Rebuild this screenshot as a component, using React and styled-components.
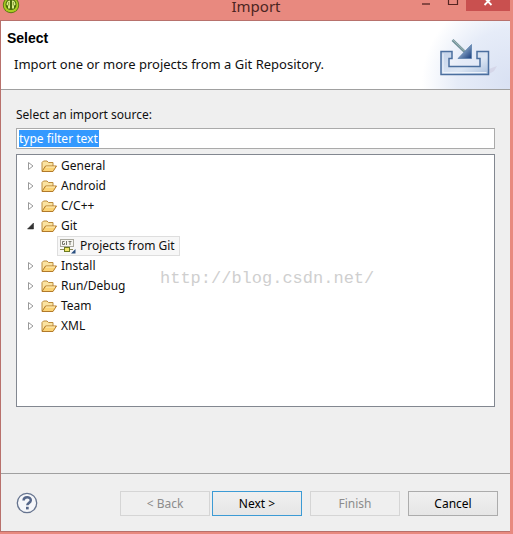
import React from 'react';
import styled, { createGlobalStyle } from 'styled-components';

const GlobalStyle = createGlobalStyle`
  * {
    box-sizing: border-box;
  }
  body {
    margin: 0;
    background: #e8897f;
    color: #111;
    font-family: 'Noto Sans', 'Open Sans', sans-serif;
    font-size: 12px;
    line-height: 20px;
  }
  button,
  input {
    font: inherit;
    color: inherit;
  }
`;

const folders = [
  { name: 'General' },
  { name: 'Android' },
  { name: 'C/C++' },
  { name: 'Git', children: ['Projects from Git'] },
  { name: 'Install' },
  { name: 'Run/Debug' },
  { name: 'Team' },
  { name: 'XML' }
];

const AppIcon = () => (
  <svg width="18" height="14" viewBox="0 0 18 14" aria-hidden="true">
    <circle cx="9" cy="5" r="8.200" fill="#56750f" />
    <circle cx="9" cy="5" r="7.300" fill="#a9cc22" />
    <circle cx="9" cy="4.500" r="5.500" fill="#4a6a0c" />
    <path
      d="M8 0.500q-3.500 0-3.500 4.500l1.500 0.500v3h2zM10 0.500q3.500 0 3.500 4.500l-1.500 0.500v3h-2z"
      fill="#dcec86"
    />
    <path d="M6.700 2v3.500M11.300 2v3.500" stroke="#56750f" strokeWidth="0.700" />
  </svg>
);

const ImportIcon = () => (
  <svg width="60" height="44" viewBox="0 0 60 44" aria-hidden="true">
    <defs>
      <linearGradient id="tray" x1="0" y1="0" x2="1" y2="1">
        <stop offset="0" stopColor="#c3d2e8" />
        <stop offset="0.600" stopColor="#dce6f4" />
        <stop offset="1" stopColor="#aabfdc" />
      </linearGradient>
      <linearGradient id="head" x1="0" y1="0" x2="1" y2="1">
        <stop offset="0.200" stopColor="#a9c3dc" />
        <stop offset="1" stopColor="#173c7c" />
      </linearGradient>
    </defs>
    <path d="M49 31l8-3-3 5-5 3z" fill="#cfcbe0" opacity="0.600" />
    <path
      d="M1 13.500h11v7H9v8h31v-8h-3v-7h11.500V36.500H1z"
      fill="url(#tray)"
      stroke="#4b6f9f"
      strokeWidth="1.500"
    />
    <path d="M3 15.500v19h43.500" fill="none" stroke="#edf3fb" />
    <path d="M12.500 2l13 12.500" stroke="#6f9099" strokeWidth="2.600" />
    <path d="M13 2l12 11.500" stroke="#a3b9b5" strokeWidth="1" />
    <path d="M31.500 6.500v14H18z" fill="url(#head)" stroke="#547ba9" strokeWidth="0.700" />
  </svg>
);

const FolderIcon = () => (
  <svg width="16" height="16" viewBox="0 0 16 16" aria-hidden="true">
    <path
      d="M1 13V4.500l1.500-1.500h3.500l1.500 1.500h4.500V8"
      fill="#fbe3a0"
      stroke="#bc8c3e"
    />
    <path d="M1 13.500l3.500-5.500h11l-3.500 5.500z" fill="#fbd375" stroke="#b27a2a" />
    <path d="M5 9h9" stroke="#fff0c0" />
  </svg>
);

const GitIcon = () => (
  <svg width="16" height="16" viewBox="0 0 16 16" aria-hidden="true">
    <rect x="0.500" y="1.500" width="13" height="7" fill="#f6f6f1" stroke="#aaa99f" />
    <path
      d="M4.500 3.500h-2v3h2v-1.500M6.500 3v4M8.500 3.500h3M10 3.500v3.500"
      stroke="#77776d"
      fill="none"
    />
    <path d="M0 11.500h13" stroke="#8a8a5a" />
    <rect x="4.500" y="9.500" width="5" height="4" fill="#f1e66a" stroke="#6b7a22" />
    <path d="M15.500 11v4.500H11z" fill="#284f80" />
  </svg>
);

const Arrow = ({ open }) => (
  <svg width="8" height="10" viewBox="0 0 8 10" aria-hidden="true">
    {open ? (
      <path d="M6.500 2v6H0.500z" fill="#333" stroke="#222" strokeWidth="0.500" />
    ) : (
      <path d="M1.500 1.500l4.500 3.500-4.500 3.500z" fill="#fff" stroke="#999" />
    )}
  </svg>
);

const HelpIcon = () => (
  <svg width="22" height="22" viewBox="0 0 22 22" aria-hidden="true">
    <circle cx="11" cy="11" r="9.700" fill="#f5f6f9" stroke="#66748f" strokeWidth="1.300" />
    <path
      d="M7.600 8.500c0-4.300 7.200-4.200 7.200-0.200 0 2.600-3.500 2.500-3.500 5"
      fill="none"
      stroke="#566789"
      strokeWidth="2.500"
    />
    <rect x="10" y="14.800" width="2.700" height="2.600" fill="#566789" />
  </svg>
);

const App = () => (
  <Window>
    <GlobalStyle />
    <TitleBar>
      <AppIcon />
      <WindowTitle>Import</WindowTitle>
      <WindowControls>
        <ControlButton aria-label="Minimize">
          <svg width="10" height="10" viewBox="0 0 10 10">
            <path d="M1 4h8" stroke="#67332f" strokeWidth="1.500" />
          </svg>
        </ControlButton>
        <ControlButton aria-label="Maximize">
          <svg width="10" height="10" viewBox="0 0 10 10">
            <path d="M0.500 0v4.500h9V0" stroke="#552522" strokeWidth="1.200" fill="none" />
          </svg>
        </ControlButton>
        <ControlButton aria-label="Close" $close>
          <svg width="10" height="10" viewBox="0 0 10 10">
            <path d="M1.500 5l7-7M8.500 5l-7-7" stroke="#fff" strokeWidth="1.800" />
          </svg>
        </ControlButton>
      </WindowControls>
    </TitleBar>
    <Dialog>
      <Header>
        <div>
          <Heading>Select</Heading>
          <Description>Import one or more projects from a Git Repository.</Description>
        </div>
        <Banner>
          <ImportIcon />
        </Banner>
      </Header>
      <Content>
        <label htmlFor="filter">Select an import source:</label>
        <FilterBox>
          <FilterInput id="filter" type="text" defaultValue="type filter text" />
        </FilterBox>
        <Tree role="tree">
          {folders.map(({ name, children }) => (
            <li key={name} role="treeitem" aria-expanded={Boolean(children)}>
              <TreeRow>
                <Arrow open={Boolean(children)} />
                <FolderIcon />
                <span>{name}</span>
              </TreeRow>
              {children && (
                <Branch role="group">
                  {children.map((child) => (
                    <Leaf key={child} role="treeitem">
                      <GitIcon />
                      <span>{child}</span>
                    </Leaf>
                  ))}
                </Branch>
              )}
            </li>
          ))}
          <Watermark>http://blog.csdn.net/</Watermark>
        </Tree>
      </Content>
      <Footer>
        <HelpButton aria-label="Help">
          <HelpIcon />
        </HelpButton>
        <Actions>
          <Pair>
            <Button disabled>&lt; Back</Button>
            <Button $primary>Next &gt;</Button>
          </Pair>
          <Button disabled>Finish</Button>
          <Button>Cancel</Button>
        </Actions>
      </Footer>
    </Dialog>
  </Window>
);

export default App;

const Window = styled.div`
  display: flex;
  flex-direction: column;
  min-height: 100vh;
  padding: 0 3px 2px 0;
  background: #e8897f;
`;

const TitleBar = styled.header`
  display: grid;
  grid-template-columns: 1fr auto 1fr;
  align-items: start;
  height: 20px;
  padding-left: 2px;
`;

const WindowTitle = styled.span`
  color: #4b2522;
  font-size: 15px;
  line-height: 12px;
`;

const WindowControls = styled.div`
  display: flex;
  justify-content: flex-end;
`;

const ControlButton = styled.button`
  display: flex;
  justify-content: center;
  width: ${(props) => (props.$close ? '44px' : '27px')};
  height: 11px;
  padding: 0;
  border: none;
  background: ${(props) => (props.$close ? '#c9504f' : 'transparent')};
  svg {
    overflow: visible;
  }
`;

const Dialog = styled.main`
  display: flex;
  flex: 1;
  flex-direction: column;
  border: 1px solid #b8716c;
  border-right: none;
  background: #efefef;
`;

const Header = styled.section`
  display: flex;
  justify-content: space-between;
  height: 69px;
  padding: 7px 0 0 6px;
  border-bottom: 1px solid #a0a0a0;
  background:
    radial-gradient(circle 88px at 100% 90%, #d9e1f3 0, #e6ecf8 60%, transparent 100%),
    #fff;
`;

const Heading = styled.h1`
  margin: 0;
  font-family: 'Liberation Sans', Arial, sans-serif;
  font-size: 14px;
  line-height: 20px;
  color: #000;
`;

const Description = styled.p`
  margin: 6px 0 0 7px;
  font-size: 13px;
`;

const Banner = styled.div`
  padding: 10px 10px 0 0;
`;

const Content = styled.section`
  display: flex;
  flex: 1;
  flex-direction: column;
  padding: 15px 15px 66px;
`;

const FilterBox = styled.div`
  height: 21px;
  margin: 3px 0 5px;
  padding: 1px 2px;
  border: 1px solid #aaa;
  background: #fff;
`;

const FilterInput = styled.input`
  display: block;
  field-sizing: content;
  max-width: 100%;
  height: 17px;
  padding: 0 1px 0 0;
  border: none;
  outline: none;
  background: #3399ff;
  color: #fff;
`;

const Tree = styled.ul`
  position: relative;
  flex: 1;
  margin: 0;
  padding: 1px 10px;
  border: 1px solid #828790;
  background: #fff;
  list-style: none;
`;

const TreeRow = styled.div`
  display: flex;
  align-items: center;
  height: 20px;
  svg + svg {
    margin: 0 4px 0 6px;
  }
`;

const Branch = styled.ul`
  display: flex;
  flex-direction: column;
  align-items: flex-start;
  margin: 0;
  padding: 0 0 0 30px;
  list-style: none;
`;

const Leaf = styled.li`
  display: flex;
  align-items: center;
  gap: 4px;
  height: 20px;
  padding: 0 4px 0 2px;
  border: 1px solid #dedede;
  background: #f7f7f7;
`;

const Watermark = styled.span`
  position: absolute;
  top: 114px;
  left: 143px;
  color: #cfcfcf;
  font-family: 'Liberation Mono', monospace;
  font-size: 17px;
  pointer-events: none;
`;

const Footer = styled.footer`
  display: flex;
  align-items: center;
  justify-content: space-between;
  height: 58px;
  padding: 2px 12px 0 15px;
  border-top: 1px solid #a0a0a0;
`;

const HelpButton = styled.button`
  display: flex;
  padding: 0 0 2px;
  border: none;
  background: transparent;
`;

const Actions = styled.div`
  display: flex;
  gap: 8px;
`;

const Pair = styled.div`
  display: flex;
  gap: 2px;
`;

const Button = styled.button`
  width: 90px;
  height: 25px;
  padding: 0;
  border: 1px solid ${(props) => (props.$primary ? '#3c9bd5' : '#acacac')};
  background: linear-gradient(#f0f0f0, #e6e6e6);
  color: #000;
  &:disabled {
    border-color: #d5d5d5;
    background: #efefef;
    color: #8c8c8c;
  }
`;
